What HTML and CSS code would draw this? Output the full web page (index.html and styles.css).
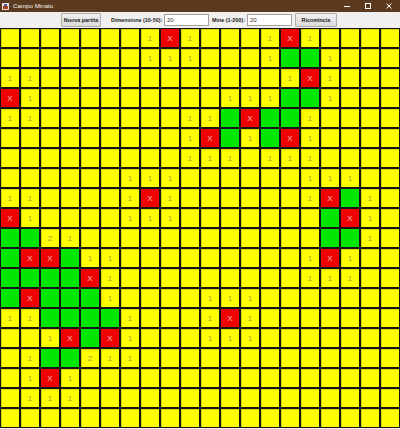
FILE: index.html
```html
<!DOCTYPE html>
<html>
<head>
<meta charset="utf-8">
<title>Campo Minato</title>
<link rel="stylesheet" href="styles.css">
</head>
<body>
<div class="window">
  <div class="titlebar">
    <svg class="app-icon" width="7" height="7" viewBox="0 0 7 7">
      <rect x="0" y="0" width="7" height="7" fill="#e8e0d8"/>
      <rect x="1" y="3" width="5" height="3" fill="#b04020"/>
      <rect x="2" y="1" width="3" height="2" fill="#4060a0"/>
    </svg>
    <span class="title">Campo Minato</span>
    <div class="controls">
      <svg width="8" height="8" viewBox="0 0 8 8"><line x1="1" y1="4.5" x2="7" y2="4.5" stroke="#fff" stroke-width="1"/></svg>
      <svg width="8" height="8" viewBox="0 0 8 8"><rect x="1.5" y="1.5" width="5" height="5" fill="none" stroke="#fff" stroke-width="1"/></svg>
      <svg width="8" height="8" viewBox="0 0 8 8"><path d="M1.5 1.5 L6.5 6.5 M6.5 1.5 L1.5 6.5" stroke="#fff" stroke-width="1"/></svg>
    </div>
  </div>
  <div class="toolbar">
    <button class="btn btn-new">Nuova partita</button>
    <span class="label label-dim">Dimensione (10-50):</span>
    <span class="field">20</span>
    <span class="label label-mine">Mine (1-200):</span>
    <span class="field">20</span>
    <button class="btn btn-restart">Ricomincia</button>
  </div>
  <div class="board" id="board"></div>
</div>
<script src="script.js"></script>
</body>
</html>
```
FILE: styles.css
```css
html, body {
  margin: 0;
  padding: 0;
  background: #f0f0f0;
}
.window {
  width: 400px;
  height: 429px;
  overflow: hidden;
  font-family: "Liberation Sans", Arial, sans-serif;
}
.titlebar {
  height: 12px;
  background: #5b3a1f;
  display: flex;
  align-items: center;
  padding-left: 2px;
  box-sizing: border-box;
}
.app-icon {
  margin-right: 4px;
}
.title {
  color: #f4eee8;
  font-size: 6.2px;
  line-height: 12px;
}
.controls {
  margin-left: auto;
  display: flex;
  gap: 13px;
  padding-right: 7px;
  align-items: center;
}
.toolbar {
  height: 16px;
  background: #f0f0f0;
  display: flex;
  align-items: center;
  padding-left: 61px;
  box-sizing: border-box;
}
.btn {
  height: 14px;
  padding: 0;
  margin: 0;
  border: 1px solid #acacac;
  border-radius: 1px;
  background: linear-gradient(#f2f2f2, #e3e3e3 50%, #dcdcdc);
  font-family: "Liberation Sans", Arial, sans-serif;
  font-weight: bold;
  font-size: 5.4px;
  color: #1a1a1a;
  box-sizing: border-box;
}
.btn-new {
  width: 40px;
}
.btn-restart {
  width: 42px;
  margin-left: 3px;
}
.label {
  font-weight: bold;
  font-size: 5.4px;
  color: #222;
  white-space: nowrap;
}
.label-dim {
  margin-left: 10px;
  width: 51px;
}
.label-mine {
  margin-left: 3px;
  width: 33px;
}
.field {
  width: 45px;
  height: 12px;
  margin-left: 2px;
  background: #fff;
  border: 1px solid #a0a0a0;
  box-sizing: border-box;
  font-size: 6px;
  line-height: 10px;
  padding-left: 2px;
  color: #333;
}
.board {
  display: grid;
  grid-template-columns: repeat(20, 20px);
  grid-auto-rows: 20px;
}
.cell {
  box-sizing: border-box;
  border: 1px solid #141414;
  background: #ffff00;
  box-shadow: inset 1px 1px 0 #d8d800;
  display: flex;
  align-items: center;
  justify-content: center;
  font-size: 8px;
  color: #9a9a50;
}
.cell.mine {
  background: #f00000;
  box-shadow: none;
  color: #f8c0c0;
}
.cell.open {
  background: #00e600;
  box-shadow: none;
}
```
FILE: script.js
```js
var rows = [
  ".......1X1...1X1....",
  ".......111...1GG1...",
  "11............1X1...",
  "X1.........111GG1...",
  "11.......11GXGG1....",
  ".........1XG1GX1....",
  ".........111.111....",
  "......111......111..",
  "11....1X1......1XG1.",
  "X1....111.......GX1.",
  "GG21............GG1.",
  "GXXG11.........1X1..",
  "GGGGX1.........111..",
  "GXGGG1....111.......",
  "11GGGG1...1X1.......",
  "..1XGX1...111.......",
  ".1GG211.............",
  ".1X1................",
  ".111................",
  "...................."
];
var board = document.getElementById("board");
rows.forEach(function (row) {
  for (var i = 0; i < 20; i++) {
    var ch = row.charAt(i);
    var cell = document.createElement("div");
    cell.className = "cell";
    if (ch === "X") {
      cell.className += " mine";
      cell.textContent = "X";
    } else if (ch === "G") {
      cell.className += " open";
    } else if (ch !== ".") {
      cell.textContent = ch;
    }
    board.appendChild(cell);
  }
});
```
